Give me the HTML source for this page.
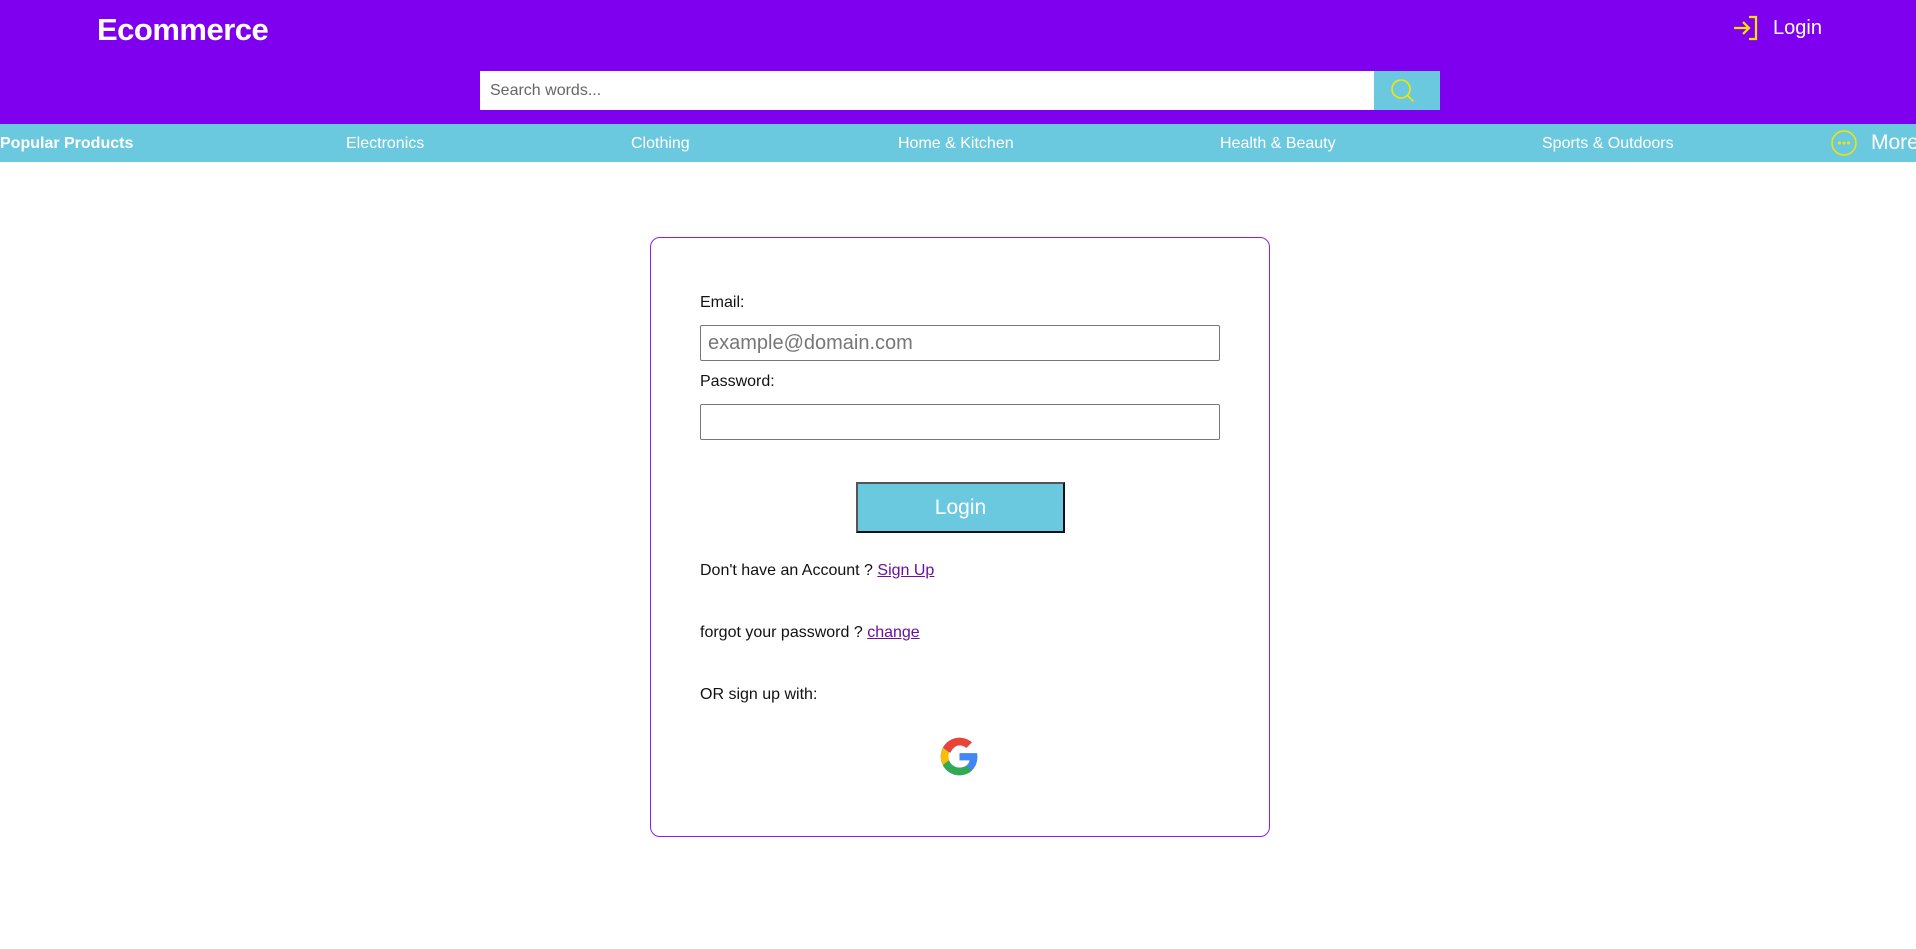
<!DOCTYPE html>
<html><head><meta charset="utf-8"><style>
*{box-sizing:border-box;margin:0;padding:0}
body{width:1916px;height:949px;background:#fff;font-family:"Liberation Sans",sans-serif;position:relative;overflow:hidden}
.hdr{position:absolute;left:0;top:0;width:1916px;height:124px;background:#7f00ef}
.abs{position:absolute;white-space:nowrap}
.nav{position:absolute;left:0;top:124px;width:1916px;height:38px;background:#6bc9df}
.nav span{position:absolute;top:10px;font-size:16px;color:#fff;line-height:20px}
.card{position:absolute;left:650px;top:237px;width:620px;height:600px;border:1px solid #8a1ff0;border-radius:10px}
.lbl{position:absolute;font-size:16px;color:#111;line-height:20px}
.inp{position:absolute;left:700px;width:520px;height:36px;border:1px solid #777;border-radius:2px;background:#fff}
a{color:#6a0fa0;text-decoration:underline}
</style></head><body>
<div class="hdr"></div>
<div class="abs" style="left:97px;top:10px;font-size:31px;font-weight:bold;color:#fff;line-height:40px;letter-spacing:-0.5px">Ecommerce</div>
<svg class="abs" style="left:1731px;top:13px" width="30" height="30" viewBox="0 0 30 30" fill="none" stroke="#f5e400" stroke-width="2.2"><path d="M3 15h14M12 9l6 6-6 6M18 4h7v22h-7"/></svg>
<div class="abs" style="left:1773px;top:16px;font-size:20px;color:#fff;line-height:24px">Login</div>
<div class="abs" style="left:480px;top:71px;width:894px;height:39px;background:#fff"></div>
<div class="abs" style="left:490px;top:81px;font-size:16px;color:#666;line-height:20px">Search words...</div>
<div class="abs" style="left:1374px;top:71px;width:66px;height:39px;background:#6bc9df"></div>
<svg class="abs" style="left:1388px;top:76px" width="30" height="30" viewBox="0 0 30 30" fill="none" stroke="#f5e400" stroke-width="1.6"><circle cx="13" cy="13" r="9"/><path d="M19.5 19.5l6 6"/></svg>
<div class="nav">
<span style="left:0;font-weight:bold">Popular Products</span>
<span style="left:346px">Electronics</span>
<span style="left:631px">Clothing</span>
<span style="left:898px">Home &amp; Kitchen</span>
<span style="left:1220px">Health &amp; Beauty</span>
<span style="left:1542px">Sports &amp; Outdoors</span>
<svg style="position:absolute;left:1830px;top:5px" width="28" height="28" viewBox="0 0 28 28" fill="none" stroke="#f5e400" stroke-width="1.5"><circle cx="14" cy="14" r="12"/><circle cx="9.5" cy="14" r=".8" fill="#f5e400"/><circle cx="14" cy="14" r=".8" fill="#f5e400"/><circle cx="18.5" cy="14" r=".8" fill="#f5e400"/></svg>
<span style="left:1871px;top:7px;font-size:21px;line-height:24px">More</span>
</div>
<div class="card"></div>
<div class="lbl" style="left:700px;top:293px">Email:</div>
<div class="inp" style="top:325px"></div>
<div class="abs" style="left:708px;top:332px;font-size:20px;color:#777;line-height:23px">example@domain.com</div>
<div class="lbl" style="left:700px;top:372px">Password:</div>
<div class="inp" style="top:404px"></div>
<div class="abs" style="left:856px;top:482px;width:209px;height:51px;background:#6bc9df;border:2px solid #111;border-top-color:#555;border-left-color:#555;color:#fff;font-size:21px;text-align:center;line-height:47px">Login</div>
<div class="lbl" style="left:700px;top:561px">Don't have an Account ? <a>Sign Up</a></div>
<div class="lbl" style="left:700px;top:623px">forgot your password ? <a>change</a></div>
<div class="lbl" style="left:700px;top:685px">OR sign up with:</div>
<svg class="abs" style="left:939px;top:736px" width="41" height="41" viewBox="0 0 48 48"><path fill="#4285f4" d="M44.5 20H24v8.5h11.8C34.7 33.9 30.1 37 24 37c-7.2 0-13-5.8-13-13s5.8-13 13-13c3.1 0 5.9 1.1 8.1 2.9l6.4-6.4C34.6 4.1 29.6 2 24 2 11.8 2 2 11.8 2 24s9.8 22 22 22c11 0 21-8 21-22 0-1.3-.2-2.7-.5-4z"/><path fill="#ea4335" d="M6.3 14.7l7 5.1C15.1 15.3 19.2 11 24 11c3.1 0 5.9 1.1 8.1 2.9l6.4-6.4C34.6 4.1 29.6 2 24 2 15.6 2 8.3 6.7 4.6 13.7z"/><path fill="#fbbc05" d="M4.6 13.7C3 16.8 2 20.3 2 24s1 7.2 2.6 10.3l7.1-5.5C11.3 27.3 11 25.7 11 24s.3-3.3.8-4.8z"/><path fill="#34a853" d="M24 46c5.9 0 10.9-2 14.5-5.4l-6.8-5.6C29.9 36.3 27.1 37 24 37c-6 0-10.6-3.6-12.3-8.6l-7.1 5.5C8.2 41.1 15.5 46 24 46z"/></svg>
</body></html>
